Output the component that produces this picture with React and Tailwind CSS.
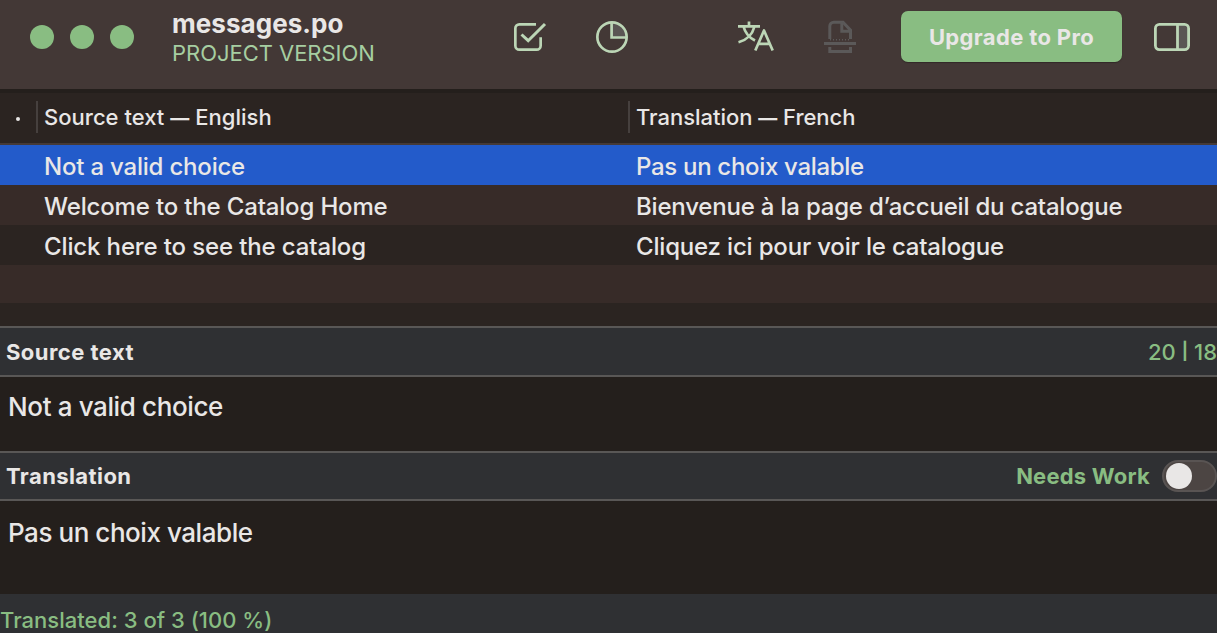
const rows = [
  { source: 'Not a valid choice', target: 'Pas un choix valable', bg: 'bg-[#235bca]', ls: 'tracking-[-0.2px]', lt: 'tracking-[-0.31px]' },
  { source: 'Welcome to the Catalog Home', target: 'Bienvenue à la page d’accueil du catalogue', bg: 'bg-[#372b28]', ls: 'tracking-[-0.16px]', lt: 'tracking-[-0.2px]' },
  { source: 'Click here to see the catalog', target: 'Cliquez ici pour voir le catalogue', bg: 'bg-[#2b2421]', ls: 'tracking-[-0.13px]', lt: 'tracking-[-0.18px]' },
];

function Validate() {
  return (
    <svg className="h-9 w-9" viewBox="0 0 36 36" fill="none" stroke="#bcd6b6" strokeWidth="2.7">
      <path d="M25 5.350H8.350a4 4 0 0 0-4 4v17.300a4 4 0 0 0 4 4h17.300a4 4 0 0 0 4-4V18.300" />
      <path d="M10.500 15.500l6.700 6.200L34 5" strokeWidth="3" />
    </svg>
  );
}

function Stats() {
  return (
    <svg className="h-9 w-9" viewBox="0 0 36 36" fill="none" stroke="#bcd6b6" strokeWidth="2.7">
      <path d="M18 3v15h15A15 15 0 0 0 18 3z" fill="#5a5654" stroke="none" />
      <circle cx="18" cy="18" r="14.650" />
      <path d="M17.600 3v15.500H33" />
    </svg>
  );
}

function Translate() {
  return (
    <svg className="h-9 w-[38px]" viewBox="0 0 38 36" fill="none" stroke="#bcd6b6" strokeWidth="2.7" strokeLinejoin="round">
      <path d="M1 7.300h22M12 2.500v5M6.500 7.500c1.500 6 5.500 11 11.500 14M17.500 7.500C15.500 15 10 21 1.500 23.300" />
      <path d="M18.300 31.500l8.700-20L35.700 31.500M21 24.800h12" />
    </svg>
  );
}

function Scan() {
  return (
    <svg className="h-9 w-9" viewBox="0 0 36 36" fill="none" stroke="#5b5959" strokeWidth="3">
      <path d="M7.800 20V7.200a4 4 0 0 1 4-4H21l7.500 8V20" />
      <path d="M19.800 3.500v8.800h8.700" />
      <path d="M8 20.800h21" strokeWidth="1.500" strokeDasharray="1 2" />
      <path d="M2 24.500h32" />
      <path d="M7.800 28v4.500h20.700V28" />
    </svg>
  );
}

function Sidebar() {
  return (
    <svg className="h-7 w-9" viewBox="0 0 36 28" fill="none" stroke="#bcd6b6" strokeWidth="2.8">
      <path d="M24 2h8a2 2 0 0 1 2 2v20a2 2 0 0 1-2 2h-8z" fill="#5a5654" stroke="none" />
      <rect x="1.400" y="1.400" width="33.200" height="25.200" rx="4" />
      <path d="M23.500 2v24" />
    </svg>
  );
}

export default function App() {
  return (
    <div className="flex h-[633px] w-[1217px] flex-col overflow-hidden whitespace-nowrap bg-[#241f1c] font-['Inter',sans-serif] text-[#e9e7e6]">
      <header className="flex h-[89px] shrink-0 items-start bg-[#433836]">
        <div className="flex gap-4 pl-[30px] pt-[25px]">
          <span className="h-6 w-6 rounded-full bg-[#89bd82]" />
          <span className="h-6 w-6 rounded-full bg-[#89bd82]" />
          <span className="h-6 w-6 rounded-full bg-[#89bd82]" />
        </div>
        <div className="w-[378px] pl-[38px] pt-[9px]">
          <div className="text-[26px] font-bold leading-[30px]"><span className="tracking-[0.05px]">messages.po</span></div>
          <div className="text-[22px] leading-[28px] text-[#a6cea1]"><span className="tracking-[-0.03px]">PROJECT VERSION</span></div>
        </div>
        <div className="flex pt-[19px]">
          <div className="-ml-px w-[84px]"><Validate /></div>
          <div className="-ml-px w-[143px]"><Stats /></div>
          <div className="w-[85px]"><Translate /></div>
          <div className="w-[79px]"><Scan /></div>
        </div>
        <button className="mt-[11px] flex h-[51px] w-[221px] items-center justify-center rounded-[7px] bg-[#89bd82] pt-0.5 text-[22px] font-bold shadow-[0_1px_1px_#322a28]"><span className="tracking-[0.36px]">Upgrade to Pro</span></button>
        <div className="ml-8 mt-[23px]"><Sidebar /></div>
      </header>

      <div className="flex h-14 shrink-0 items-center border-b-2 border-t-4 border-b-[#453a37] border-t-[#241f1c] bg-[#2b2421] text-[22px] font-medium">
        <div className="flex w-9 justify-center"><span className="mt-px h-1 w-1 rounded-full bg-[#e9e7e6]" /></div>
        <div className="mb-0.5 flex h-8 w-[592px] items-center border-l-2 border-[#46403e] pl-1.5"><span className="tracking-[0.02px]">Source text <span className="text-[19px] font-bold">—</span> English</span></div>
        <div className="mb-0.5 flex h-8 items-center border-l-2 border-[#46403e] pl-1.5"><span className="tracking-[-0.03px]">Translation <span className="text-[19px] font-bold">—</span> French</span></div>
      </div>

      {rows.map((r) => (
        <div key={r.source} className={`flex h-10 shrink-0 items-center pl-11 pt-[3px] text-[24px] font-[450] ${r.bg}`}>
          <div className="w-[592px]"><span className={r.ls}>{r.source}</span></div>
          <div><span className={r.lt}>{r.target}</span></div>
        </div>
      ))}
      <div className="h-[38px] shrink-0 bg-[#372b28]" />
      <div className="h-[23px] shrink-0 bg-[#2b2421]" />

      <div className="flex h-[51px] shrink-0 items-center justify-between border-y-2 border-[#595756] bg-[#2f3033] pl-1.5 pt-px text-[22px]">
        <span className="font-bold tracking-[0.46px]">Source text</span>
        <span className="flex items-center gap-1.5 font-[450] text-[#89bd82]">
          <span>20</span><span className="text-[17px] font-bold">|</span><span>18</span>
        </span>
      </div>
      <div className="h-[74px] shrink-0 pl-2 pt-[14px] text-[26px] font-[450] leading-8"><span className="tracking-[-0.37px]">Not a valid choice</span></div>

      <div className="flex h-[50px] shrink-0 items-center border-y-2 border-[#595756] bg-[#2f3033] pl-1.5 text-[22px] font-bold">
        <span className="tracking-[0.42px]">Translation</span>
        <span className="ml-auto mr-3 tracking-[0.22px] text-[#89bd82]">Needs Work</span>
        <div className="flex h-8 w-[55px] items-center rounded-full border-2 border-[#595453] bg-[#4c4543] pl-0.5">
          <span className="h-[26px] w-[26px] rounded-full bg-[#e9e7e6]" />
        </div>
      </div>
      <div className="h-[93px] shrink-0 pl-2 pt-4 text-[26px] font-[450] leading-8"><span className="tracking-[-0.45px]">Pas un choix valable</span></div>

      <footer className="h-[39px] shrink-0 bg-[#2f3033] pt-3 text-[22px] font-[450] leading-7 text-[#89bd82]"><span className="tracking-[0.02px]">Translated: 3 of 3 (100 %)</span></footer>
    </div>
  );
}
